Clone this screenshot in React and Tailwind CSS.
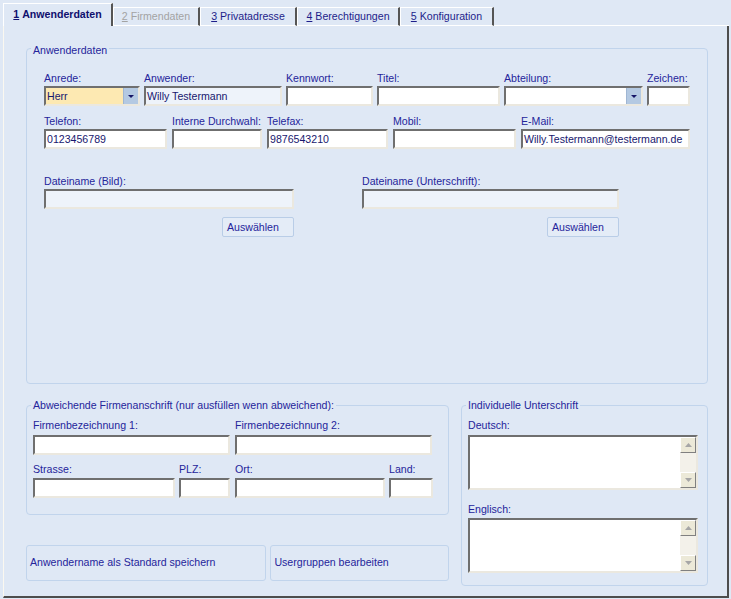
import React from "react";

const Label = ({ children, h = "h-[14px]" }) => (
  <div className={`${h} leading-[13px] whitespace-nowrap text-[#25259b]`}>{children}</div>
);

const Input = ({ value, readOnly }) => (
  <div
    className={`h-[20px] border-2 border-t-[#6f6f6f] border-l-[#6f6f6f] border-r-[#ebe8df] border-b-[#ebe8df] pl-[1px] leading-[16px] whitespace-nowrap overflow-hidden text-[#17176e] ${
      readOnly ? "bg-[#eef3fa]" : "bg-white"
    }`}
  >
    {value}
  </div>
);

const Combo = ({ value, yellow }) => (
  <div
    className={`flex h-[20px] border-2 border-t-[#6f6f6f] border-l-[#6f6f6f] border-r-[#ebe8df] border-b-[#ebe8df] ${
      yellow ? "bg-[#fde9b2]" : "bg-white"
    }`}
  >
    <div className="flex-1 pl-[1px] leading-[16px] text-[#17176e]">{value}</div>
    <div className="w-[15px] h-full bg-[#b4c9e2] border-l border-[#9fb6d3] flex items-center justify-center">
      <svg width="6" height="3" viewBox="0 0 6 3">
        <path d="M0 0h6L3 3z" fill="#141466" />
      </svg>
    </div>
  </div>
);

const Field = ({ label, w, h, children }) => (
  <div className={`flex flex-col ${w}`}>
    <Label h={h}>{label}</Label>
    {children}
  </div>
);

const Group = ({ title, className, legendTop, children }) => (
  <div className={`relative rounded-[4px] border border-[#c1d4ec] ${className}`}>
    <span className={`absolute left-[4px] ${legendTop} px-[2px] bg-[#dfe8f5] leading-[13px] text-[#25259b] whitespace-nowrap`}>
      {title}
    </span>
    {children}
  </div>
);

const ScrollBtn = ({ up }) => (
  <div className="h-[16px] bg-[#ece9d8] border border-t-white border-l-white border-b-[#808080] border-r-[#808080] flex items-center justify-center">
    <svg width="7" height="4" viewBox="0 0 7 4">
      <path d={up ? "M0 4L3.5 0L7 4z" : "M0 0h7L3.5 4z"} fill="#a6a6a6" />
    </svg>
  </div>
);

const Memo = () => (
  <div className="flex h-[55px] w-[230px] bg-white border-2 border-t-[#6f6f6f] border-l-[#6f6f6f] border-r-[#ebe8df] border-b-[#ebe8df]">
    <div className="flex-1" />
    <div className="w-[16px] flex flex-col">
      <ScrollBtn up />
      <div className="flex-1 bg-[#f3f1ea]" />
      <ScrollBtn />
    </div>
  </div>
);

const Tab = ({ n, label, w, active, disabled }) => (
  <div
    className={`${w} flex items-center justify-center whitespace-nowrap border-l border-t border-white border-r-2 border-r-[#555555] ${
      active
        ? "h-[23px] font-bold text-[#0f0f6e]"
        : `h-[19px] border-b ${disabled ? "text-[#a3a3a3]" : "text-[#1d1d8a]"}`
    }`}
  >
    <span className="underline">{n}</span>&nbsp;{label}
  </div>
);

export default function App() {
  return (
    <div className="w-[731px] h-[599px] bg-[#dfe8f5] font-['Liberation_Sans',Arial,sans-serif] text-[10.6px] overflow-hidden">
      <div className="flex items-end h-[26px] pl-[3px]">
        <Tab n="1" label="Anwenderdaten" w="w-[110px]" active />
        <Tab n="2" label="Firmendaten" w="w-[87px]" disabled />
        <Tab n="3" label="Privatadresse" w="w-[97px]" />
        <Tab n="4" label="Berechtigungen" w="w-[103px]" />
        <Tab n="5" label="Konfiguration" w="w-[94px]" />
        <div className="flex-1 mr-[2px] h-[1px] bg-white" />
      </div>

      <div className="flex flex-col ml-[3px] w-[726px] h-[572px] pt-[22px] border-l border-l-[#fbf8f0] border-r-2 border-b-2 border-r-[#4d4d4d] border-b-[#4d4d4d]">
        <Group title="Anwenderdaten" legendTop="-top-[5px]" className="ml-[22px] w-[682px] h-[336px] shrink-0">
          <div className="pl-[17px] pt-[23px]">
            <div className="flex gap-[4px]">
              <Field label="Anrede:" w="w-[96px]"><Combo value="Herr" yellow /></Field>
              <Field label="Anwender:" w="w-[138px]"><Input value="Willy Testermann" readOnly /></Field>
              <Field label="Kennwort:" w="w-[87px]"><Input /></Field>
              <Field label="Titel:" w="w-[123px]"><Input /></Field>
              <Field label="Abteilung:" w="w-[139px]"><Combo /></Field>
              <Field label="Zeichen:" w="w-[43px]"><Input /></Field>
            </div>
            <div className="flex gap-[5px] mt-[9px]">
              <Field label="Telefon:" w="w-[123px]"><Input value="0123456789" /></Field>
              <Field label="Interne Durchwahl:" w="w-[90px]"><Input /></Field>
              <Field label="Telefax:" w="w-[121px]"><Input value="9876543210" /></Field>
              <Field label="Mobil:" w="w-[123px]"><Input /></Field>
              <Field label="E-Mail:" w="w-[169px]"><Input value="Willy.Testermann@testermann.de" /></Field>
            </div>
            <div className="flex gap-[68px] mt-[26px]">
              {["Dateiname (Bild):", "Dateiname (Unterschrift):"].map((l, i) => (
                <div key={l} className={`flex flex-col ${i === 0 ? "w-[250px]" : "w-[257px]"}`}>
                  <Label>{l}</Label>
                  <Input readOnly />
                  <button className="self-end mt-[8px] w-[72px] h-[20px] pl-[4px] text-left rounded-[2px] border border-[#b9cde7] bg-[#e4ecf7] text-[#25259b] leading-[13px]">
                    Auswählen
                  </button>
                </div>
              ))}
            </div>
          </div>
        </Group>

        <div className="flex ml-[22px] mt-[21px]">
          <div className="flex flex-col w-[423px]">
            <Group
              title="Abweichende Firmenanschrift (nur ausfüllen wenn abweichend):"
              legendTop="-top-[7px]"
              className="w-[423px] h-[110px]"
            >
              <div className="pl-[6px] pt-[13px]">
                <div className="flex gap-[5px]">
                  <Field label="Firmenbezeichnung 1:" w="w-[197px]" h="h-[16px]"><Input /></Field>
                  <Field label="Firmenbezeichnung 2:" w="w-[197px]" h="h-[16px]"><Input /></Field>
                </div>
                <div className="flex mt-[8px]">
                  <Field label="Strasse:" w="w-[142px]" h="h-[15px]"><Input /></Field>
                  <div className="ml-[4px]"><Field label="PLZ:" w="w-[51px]" h="h-[15px]"><Input /></Field></div>
                  <div className="ml-[5px]"><Field label="Ort:" w="w-[150px]" h="h-[15px]"><Input /></Field></div>
                  <div className="ml-[4px]"><Field label="Land:" w="w-[44px]" h="h-[15px]"><Input /></Field></div>
                </div>
              </div>
            </Group>
            <div className="flex gap-[4px] mt-[30px]">
              <button className="w-[241px] h-[36px] pl-[3px] text-left rounded-[3px] border border-[#c1d4ec] text-[#25259b]">
                Anwendername als Standard speichern
              </button>
              <button className="w-[179px] h-[36px] pl-[3px] text-left rounded-[3px] border border-[#c1d4ec] text-[#25259b]">
                Usergruppen bearbeiten
              </button>
            </div>
          </div>

          <Group title="Individuelle Unterschrift" legendTop="-top-[7px]" className="ml-[12px] w-[247px] h-[181px]">
            <div className="pl-[6px] pt-[13px]">
              <Label h="h-[16px]">Deutsch:</Label>
              <Memo />
              <div className="mt-[13px]">
                <Label h="h-[15px]">Englisch:</Label>
              </div>
              <Memo />
            </div>
          </Group>
        </div>
      </div>
    </div>
  );
}
